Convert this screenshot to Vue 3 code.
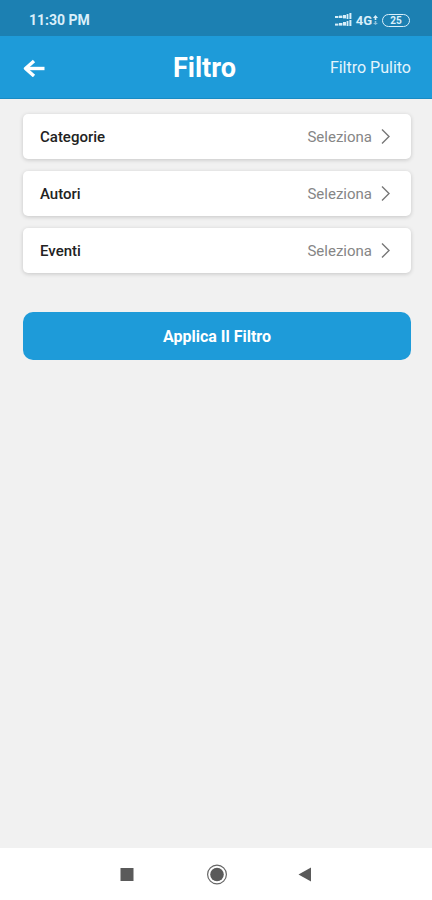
<script setup>
import { ref } from 'vue'

const filters = ref([
  { id: 'categories', label: 'Categorie', value: 'Seleziona' },
  { id: 'authors', label: 'Autori', value: 'Seleziona' },
  { id: 'events', label: 'Eventi', value: 'Seleziona' },
])
</script>

<template>
  <div class="screen">
    <div class="status">
      <span class="time">11:30 PM</span>
      <div class="indicators">
        <svg class="signal" width="17" height="14" viewBox="0 0 17 14">
          <g fill="currentColor">
            <rect x="0" y="3" width="3.4" height="2" />
            <rect x="4" y="2.6" width="3.4" height="2.4" />
            <rect x="8" y="2" width="3" height="3.4" />
            <rect x="11.6" y="1" width="1.8" height="5" />
            <rect x="14.4" y="0" width="2" height="6" />
            <rect x="0" y="10.6" width="3.4" height="2" />
            <rect x="4" y="10" width="3.4" height="2.6" />
            <rect x="8" y="9" width="3" height="3.6" />
            <rect x="11.6" y="8" width="1.8" height="5" />
            <rect x="14.4" y="7" width="2" height="6" />
          </g>
        </svg>
        <span class="network">4G</span>
        <svg class="data" width="5" height="10" viewBox="0 0 5 10">
          <path d="M2.5 0L5 3H3.3v2H1.7V3H0z" fill="currentColor" />
          <path d="M2.5 10L0 8h1.7V6h1.6v2H5z" fill="currentColor" opacity=".6" />
        </svg>
        <span class="battery">25</span>
      </div>
    </div>

    <header class="bar">
      <button class="back" type="button" aria-label="Indietro">
        <svg width="22" height="18" viewBox="0 0 22 18" fill="none" stroke="currentColor" stroke-width="3.4">
          <path d="M2.5 9.5H21.5" />
          <path d="M11 2L2.5 9.5l8.500 7.500" stroke-linejoin="round" />
        </svg>
      </button>
      <h1 class="title">Filtro</h1>
      <button class="clear" type="button">Filtro Pulito</button>
    </header>

    <main class="content">
      <div class="list">
        <button v-for="filter in filters" :key="filter.id" class="row" type="button">
          <span class="label">{{ filter.label }}</span>
          <span class="value">{{ filter.value }}</span>
          <svg width="9" height="16" viewBox="0 0 9 16" fill="none" stroke="#777" stroke-width="1.4">
            <path d="M1 .5l7 7-7 7" />
          </svg>
        </button>
      </div>
      <button class="apply" type="button">Applica Il Filtro</button>
    </main>

    <nav class="system">
      <button type="button" aria-label="Recenti">
        <svg width="20" height="20" viewBox="0 0 20 20"><rect x="3.500" y="4" width="13" height="13" fill="#5a5a5a" /></svg>
      </button>
      <button type="button" aria-label="Home">
        <svg width="22" height="22" viewBox="0 0 22 22">
          <circle cx="12" cy="11.500" r="9.4" fill="none" stroke="#666" stroke-width="1.2" />
          <circle cx="12" cy="11.500" r="6.8" fill="#5a5a5a" />
        </svg>
      </button>
      <button type="button" aria-label="Precedente">
        <svg width="20" height="20" viewBox="0 0 20 20"><path d="M3.500 10.500L16 3.500v14z" fill="#5a5a5a" /></svg>
      </button>
    </nav>
  </div>
</template>

<style>
body {
  margin: 0;
  background: #f1f1f1;
}
</style>

<style scoped>
.screen {
  display: flex;
  flex-direction: column;
  min-height: 100vh;
  background: #f1f1f1;
  font-family: Roboto, "Liberation Sans", sans-serif;
}

button {
  margin: 0;
  padding: 0;
  border: 0;
  background: none;
  color: inherit;
  font: inherit;
  cursor: pointer;
}

svg {
  display: block;
}

.status {
  display: flex;
  align-items: center;
  justify-content: space-between;
  box-sizing: border-box;
  height: 36px;
  padding: 4px 22px 0 29px;
  background: #1c80b2;
  color: #d9effa;
}

.time {
  font-size: 14px;
  font-weight: 700;
}

.indicators {
  display: flex;
  align-items: center;
}

.network {
  margin-left: 4px;
  font-size: 13px;
  font-weight: 700;
}

.data {
  margin: 0 4px 0 1px;
}

.battery {
  box-sizing: border-box;
  width: 28px;
  height: 13px;
  border: 1px solid currentColor;
  border-radius: 7px;
  font-size: 10px;
  font-weight: 700;
  line-height: 11px;
  text-align: center;
}

.bar {
  display: flex;
  align-items: center;
  justify-content: space-between;
  box-sizing: border-box;
  height: 63px;
  padding: 1px 21px 0 23px;
  border-bottom: 1px solid #188bc4;
  background: #1e9bd9;
  color: #fff;
}

.back {
  width: 56px;
}

.title {
  margin: 0;
  font-size: 27px;
  font-weight: 700;
  line-height: 32px;
}

.clear {
  color: #e4f4fc;
  font-size: 16px;
}

.content {
  flex: 1;
  padding: 15px 21px 24px 23px;
}

.list {
  display: grid;
  gap: 12px;
  margin-bottom: 39px;
}

.row {
  display: flex;
  align-items: center;
  height: 45px;
  padding: 0 21px 0 17px;
  border-radius: 5px;
  background: #fff;
  box-shadow: 0 1px 4px rgba(0, 0, 0, 0.18);
  font-size: 15px;
}

.label {
  flex: 1;
  color: #222;
  font-weight: 500;
  text-align: left;
}

.value {
  margin-right: 9px;
  color: #868686;
}

.apply {
  width: 100%;
  height: 48px;
  border-radius: 10px;
  background: #1e9bd9;
  color: #fff;
  font-size: 16px;
  font-weight: 700;
}

.system {
  display: flex;
  align-items: center;
  justify-content: center;
  gap: 49px;
  height: 52px;
  background: #fff;
}

.system button {
  display: grid;
  place-items: center;
  width: 40px;
  height: 40px;
}
</style>
